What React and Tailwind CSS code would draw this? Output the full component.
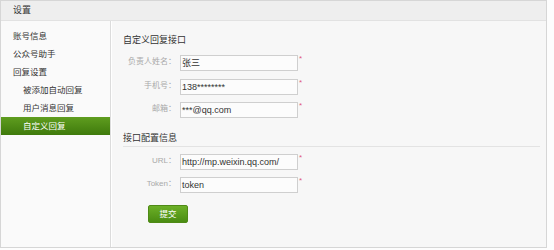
const font = { fontFamily: '"Liberation Sans", "Noto Sans CJK SC", sans-serif' };

const navItems = [
  { label: "账号信息", sub: false },
  { label: "公众号助手", sub: false },
  { label: "回复设置", sub: false },
  { label: "被添加自动回复", sub: true },
  { label: "用户消息回复", sub: true },
  { label: "自定义回复", sub: true, active: true },
];

function Field({ label, value, className = "" }) {
  return (
    <div className={"flex items-start h-[16px] " + className}>
      <div className="w-[54px] text-right text-[8px] leading-[14px] text-[#a9a9a9] pr-[1px]">
        {label}：
      </div>
      <div className="ml-[3px] w-[118px] h-[16px] border border-[#cfcfcf] bg-[#fcfcfc] text-[9px] leading-[14px] text-[#333] pl-[1px]">
        {value}
      </div>
      <span className="ml-[1px] -mt-[1px] text-[8px] leading-[10px] text-[#e0577f]">*</span>
    </div>
  );
}

export default function App() {
  return (
    <div className="w-[554px] h-[250px] bg-[#fdfdfd]" style={font}>
      <div className="w-[547px] h-[248px] border border-[#d6d6d6] flex flex-col bg-[#f7f7f7]">
        <div className="h-[20px] shrink-0 border-b border-[#e2e2e2] bg-[#eeeeee] flex items-center pl-[12px] text-[9px] text-[#333]">
          设置
        </div>
        <div className="flex flex-1">
          <div className="w-[110px] shrink-0 border-r border-[#dcdcdc] bg-[#fafafa] pt-[6px] shadow-[1px_0_0_#fff]">
            {navItems.map((it) => (
              <div
                key={it.label}
                className={
                  "h-[18px] flex items-center text-[8.5px] " +
                  (it.sub ? "pl-[22px] " : "pl-[12px] ") +
                  (it.active
                    ? "bg-[linear-gradient(#5f9d1f,#3f7a0c)] text-white"
                    : "text-[#333]")
                }
              >
                {it.label}
              </div>
            ))}
          </div>
          <div className="flex-1 pl-[12px] pr-[6px] pt-[13px]">
            <div className="h-[12px] text-[9px] leading-[12px] text-[#333]">自定义回复接口</div>
            <Field className="mt-[9px]" label="负责人姓名" value="张三" />
            <Field className="mt-[8px]" label="手机号" value="138********" />
            <Field className="mt-[7px]" label="邮箱" value="***@qq.com" />
            <div className="mt-[14px] h-[12px] text-[9px] leading-[12px] text-[#333]">接口配置信息</div>
            <div className="mt-[2px] border-t border-[#e3e3e3]" />
            <Field className="mt-[7px]" label="URL" value="http://mp.weixin.qq.com/" />
            <Field className="mt-[7px]" label="Token" value="token" />
            <button className="mt-[12px] ml-[25px] w-[40px] h-[18px] rounded-[2px] border border-[#4f8a16] bg-[linear-gradient(#6cb027,#4a8c12)] text-[8.5px] text-white leading-[16px]">
              提交
            </button>
          </div>
        </div>
      </div>
    </div>
  );
}
